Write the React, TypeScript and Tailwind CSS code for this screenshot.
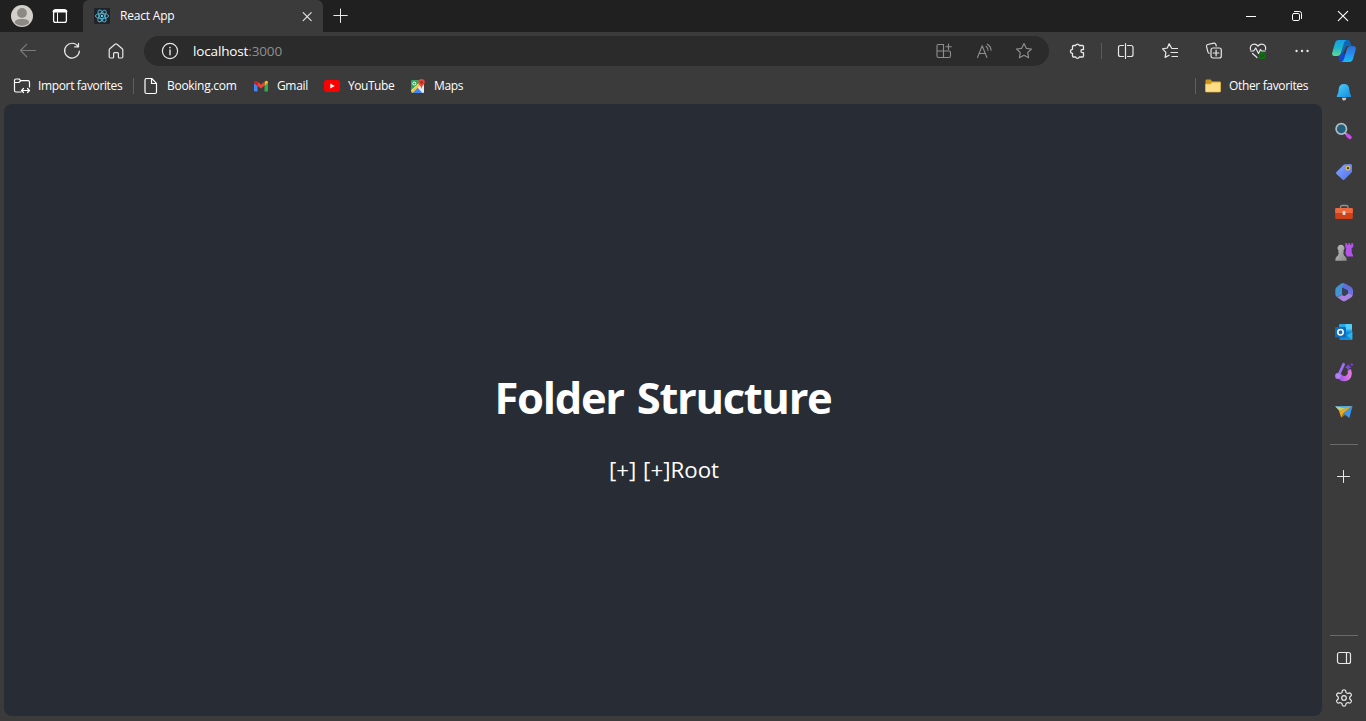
import React, { ReactNode } from 'react';

type P = { children: ReactNode; size?: number; className?: string; w?: number };
const Icon = ({ children, size = 20, w = 1.1, className = '' }: P) => (
  <svg width={size} height={size} viewBox={`0 0 ${size} ${size}`} fill="none" stroke="currentColor" strokeWidth={w} strokeLinecap="round" strokeLinejoin="round" className={`shrink-0 ${className}`}>{children}</svg>
);
const Cell = ({ children, className }: { children: ReactNode; className: string }) => (
  <div className={`flex shrink-0 items-center justify-center ${className}`}>{children}</div>
);

const STAR = 'M10 2.6l2.3 4.7 5.1.7-3.7 3.6.9 5.1L10 14.3l-4.6 2.4.9-5.1L2.6 8l5.1-.7z';

function Gear() {
  const pts: string[] = [];
  for (let i = 0; i <= 72; i++) {
    const a = (i / 72) * Math.PI * 2;
    const r = 6.9 + 1.2 * Math.tanh(2.2 * Math.cos(6 * a));
    pts.push(`${(10 + r * Math.sin(a)).toFixed(2)} ${(10 - r * Math.cos(a)).toFixed(2)}`);
  }
  return <Icon w={1.2}><path d={`M${pts.join('L')}z`} /><circle cx="10" cy="10" r="2.3" /></Icon>;
}

function TabBar() {
  return (
    <header className="flex h-8 shrink-0 bg-[#202020]">
      <div className="flex w-[83px] items-center pl-[11px]">
        <svg width="22" height="22" viewBox="0 0 22 22"><circle cx="11" cy="11" r="11" fill="#d3d0cc" /><circle cx="11" cy="8" r="4.9" fill="#8c8883" /><path d="M3.8 18c0-3 2.300-4 7.200-4s7.200 1 7.200 4A10.500 10.500 0 0 1 11 21a10.500 10.500 0 0 1-7.200-3z" fill="#8c8883" /></svg>
        <Icon className="ml-[17px] text-white" w={1.3}><rect x="3.6" y="3.6" width="12.8" height="12.8" rx="2" /><path d="M4 5.2h12" strokeWidth="2.6" /><path d="M7.500 7v9" strokeWidth="1" /></Icon>
      </div>
      <div className="flex w-60 items-center rounded-t-md bg-[#3b3b3b] pl-[11px]">
        <svg width="16" height="16" viewBox="0 0 16 16" fill="none" stroke="#52b6d1" strokeWidth=".9"><rect width="16" height="16" rx="1" fill="#20232a" stroke="none" /><ellipse cx="8" cy="8" rx="6.6" ry="2.6" /><ellipse cx="8" cy="8" rx="6.6" ry="2.6" transform="rotate(60 8 8)" /><ellipse cx="8" cy="8" rx="6.6" ry="2.6" transform="rotate(120 8 8)" /><circle cx="8" cy="8" r="1.2" fill="#61dafb" stroke="none" /></svg>
        <span className="ml-[10px] flex-1 text-xs tracking-[-0.2px] text-white">React App</span>
        <Icon className="mr-[6px]"><path d="M6.200 6.700l8 8M14.200 6.700l-8 8" /></Icon>
      </div>
      <Icon className="ml-2 mt-[6px]"><path d="M9.500 3v13.500M2.800 9.500h13.500" strokeWidth="1" /></Icon>
      <div className="ml-auto flex text-white">
        <Cell className="w-[46px]"><Icon w={1}><path d="M5 10.500h10" strokeLinecap="butt" /></Icon></Cell>
        <Cell className="w-[46px]"><Icon w={1}><rect x="5.500" y="7.500" width="7" height="7" rx="1.300" /><path d="M7.500 5.500h5q2 0 2 2v5" /></Icon></Cell>
        <Cell className="w-[46px]"><Icon><path d="M5.300 5.300l9.400 9.400M14.700 5.300l-9.400 9.400" /></Icon></Cell>
      </div>
    </header>
  );
}

function Toolbar() {
  return (
    <div className="flex h-[38px] items-center pl-[6px]">
      <Cell className="w-11 text-[#7c7c7c]"><Icon><path d="M17.500 9.500h-15M8.800 3.200L2.500 9.500l6.300 6.300" /></Icon></Cell>
      <Cell className="w-11"><Icon w={1.2}><path d="M16.200 5.600A7.400 7.400 0 1 0 17.400 10M16.500 2.300v3.600h-3.800" /></Icon></Cell>
      <Cell className="w-11"><Icon w={1.2}><path d="M3.200 9q0-.8.600-1.300l5.200-4.500q1-.8 2 0l5.200 4.500q.6.500.6 1.300v6.800q0 1.200-1.200 1.200h-2.200q-1 0-1-1v-3.400q0-1-1-1h-2.800q-1 0-1 1V16q0 1-1 1H4.400q-1.200 0-1.200-1.200z" /></Icon></Cell>
      <div className="ml-[6px] flex h-[30px] w-[905px] shrink-0 items-center rounded-full bg-[#2b2b2b] pl-4 pr-[5px]">
        <Icon w={1.2}><circle cx="10" cy="10" r="7.600" /><path d="M10 9v4.800" strokeWidth="1.400" /><path d="M10 6.500v.1" strokeWidth="1.700" /></Icon>
        <span className="ml-[13px] flex-1 text-[13.5px] tracking-[-0.14px] text-white">localhost<span className="text-[#8f8f8f]">:3000</span></span>
        <div className="flex text-[#8e8e8e]">
          <Cell className="w-10"><Icon><path d="M9.500 3.500h-5q-1.500 0-1.500 1.500v10q0 1.500 1.500 1.500h10.500q1.500 0 1.500-1.500v-3.500q0-1.500-1.500-1.500H3M9.500 3.500v13M14.500 3v5.500M11.800 5.700h5.500" /></Icon></Cell>
          <Cell className="w-10"><Icon><path d="M3.500 16.500l4.700-11.800 4.700 11.800M5.100 12.500h6.200M12 5.300q2 1.400 2 4M13.300 3.200q3.700 2.300 3.700 6" /></Icon></Cell>
          <Cell className="w-10"><Icon w={1.2}><path d={STAR} /></Icon></Cell>
        </div>
      </div>
      <Cell className="ml-[6px] w-11"><Icon w={1.3}><path d="M6.500 4.500h2.200a1.900 1.900 0 0 1 3.600 0H15.500q1 0 1 1v3h-1a1.600 1.600 0 0 0 0 3.200h1v3.300q0 1-1 1h-3.200a1.900 1.900 0 0 1-3.600 0H6.500q-1 0-1-1v-2.700a2 2 0 0 1 0-4V5.500q0-1 1-1z" /></Icon></Cell>
      <div className="mx-[2px] h-4 w-px shrink-0 bg-[#5b5b5b]" />
      <Cell className="w-11"><Icon w={1.2}><path d="M7.500 4.500H4.500q-2 0-2 2v7q0 2 2 2h3M11.500 4.500h3.500q2 0 2 2v7q0 2-2 2h-3.500M9.500 2.500v15" /></Icon></Cell>
      <Cell className="w-11"><Icon w={1.2}><path d="M11.500 7L9.200 2.700 7.300 7l-4.700.8 3.300 3.600-.8 5 4-2.200M12 7.500h5.500M11 11.500h6.500M12 15.500h5.500" /></Icon></Cell>
      <Cell className="w-11"><Icon w={1.2}><path d="M5.200 12.300q-1-.3-1.300-1.400L2.500 5.400q-.3-1.500 1.200-1.900l6.200-1.300q1.400-.2 1.900 1.100l.5 1.700" /><rect x="7" y="7" width="10.300" height="10" rx="2" /><path d="M12.100 9.200v5.600M9.300 12h5.600" /></Icon></Cell>
      <Cell className="w-11"><Icon w={1.2}><path d="M2.500 8.500C1.500 4 6.500 1 10 5c3.500-4 8.500-1 7.500 3.500M2.500 10h3.200l2-3 2.800 5.500 2-4 1.200 1.500h3.500M4.500 12.500l4.500 4" /><circle cx="14.300" cy="14.700" r="3.600" fill="#0d7010" stroke="none" /><path d="M12.800 14.800l1.100 1 2-2" stroke="#2c2c2c" strokeWidth=".8" /></Icon></Cell>
      <Cell className="w-11"><Icon><path d="M4.500 10h.1M10 10h.1M15.500 10h.1" strokeWidth="2.300" /></Icon></Cell>
    </div>
  );
}

function Bookmarks() {
  return (
    <div className="flex h-[34px] items-center pb-[2px] pl-3 text-xs tracking-[-0.35px] text-white">
      <div className="flex w-[121px] items-center whitespace-nowrap">
        <Icon w={1.2}><path d="M9 16H4q-1.500 0-1.500-1.500v-10Q2.500 3 4 3h3l1.700 1.700H16q1.500 0 1.500 1.500V11M2.800 6.500h4l2-1.700M9.500 14.500h8M11.500 12.500l-2 2 2 2M15.500 12.500l2 2-2 2" /></Icon>
        <span className="ml-[6px]">Import favorites</span>
      </div>
      <div className="h-4 w-px bg-[#5f5f5f]" />
      <div className="ml-[7px] flex w-[110px] items-center">
        <Icon w={1.2}><path d="M5.500 2.500h5.200l4.800 4.800v8.700q0 1.500-1.500 1.500H5.500Q4 17.500 4 16V4q0-1.500 1.500-1.500zM10.500 2.800v4.700h4.800" /></Icon>
        <span className="ml-[6px] tracking-[-0.28px]">Booking.com</span>
      </div>
      <div className="flex w-[71px] items-center">
        <svg className="ml-[2px]" width="16" height="16" viewBox="0 0 16 16"><path d="M1 4.500l3.500 2.600V13.500H2.200Q1 13.500 1 12.300z" fill="#4285f4" /><path d="M15 4.500l-3.500 2.600v6.400h2.300q1.200 0 1.200-1.200z" fill="#34a853" /><path d="M11.500 4l1-.9q1.200-.7 2.100.2.400.4.400 1.500l-3.500 3z" fill="#fbbc04" /><path d="M4.500 3.800L8 6.500l3.500-2.700v4L8 10.500 4.500 7.800z" fill="#ea4335" /><path d="M1 4.800Q1 2.800 2.700 2.800q.6 0 1.800 1v4L1 5.500z" fill="#c5221f" /></svg>
        <span className="ml-[8px]">Gmail</span>
      </div>
      <div className="flex w-[87px] items-center">
        <svg className="ml-[2px]" width="16" height="16" viewBox="0 0 16 16"><rect y="2" width="16" height="12" rx="3" fill="#f00" /><path d="M6.300 5.400v5.200L10.700 8z" fill="#fff" /></svg>
        <span className="ml-[8px] tracking-[-0.45px]">YouTube</span>
      </div>
      <div className="flex items-center">
        <svg className="ml-px" width="16" height="16" viewBox="0 0 16 16"><rect x="1" y="2" width="13" height="13" rx="1" fill="#35a35b" /><path d="M1 12.500L11 3l3 3v8q0 1-1 1H3z" fill="#e8eaed" /><path d="M2.500 15l5-5.500 5 5.500z" fill="#4285f4" /><path d="M2 14L12.500 3.500" stroke="#fbc02d" strokeWidth="1.800" /><path d="M11.500 1a3.300 3.300 0 0 1 3.300 3.300c0 2.300-2.800 3-3.300 6.700-.5-3.700-3.300-4.400-3.300-6.700A3.300 3.300 0 0 1 11.500 1z" fill="#ea4335" /><circle cx="11.500" cy="4.400" r="1.200" fill="#8c2b20" /><circle cx="4.300" cy="5.500" r="1.500" fill="none" stroke="#fff" /></svg>
        <span className="ml-[8px]">Maps</span>
      </div>
      <div className="ml-auto h-4 w-px bg-[#5f5f5f]" />
      <div className="ml-[9px] flex w-[117px] items-center whitespace-nowrap">
        <svg width="16" height="16" viewBox="0 0 16 16"><path d="M.5 2.500q0-1 1-1h4.200l1.600 2h7.200q1 0 1 1v9.500h-15z" fill="#c9961b" /><path d="M.5 6h5l1.800-1.800h8.200V13q0 1-1 1h-13q-1 0-1-1z" fill="#ffdf85" stroke="#e2b13c" strokeWidth=".7" /></svg>
        <span className="ml-[8px]">Other favorites</span>
      </div>
    </div>
  );
}

function Copilot() {
  return (
    <svg width="24" height="24" viewBox="0 0 24 24">
      <defs>
        <linearGradient id="ca" x1="0" y1="0" x2="0" y2="1"><stop offset="0" stopColor="#12a0e8" /><stop offset=".5" stopColor="#1fb5c9" /><stop offset="1" stopColor="#5fdc94" /></linearGradient>
        <linearGradient id="cb" x1="0" y1="0" x2="0" y2="1"><stop offset="0" stopColor="#2470d8" /><stop offset=".5" stopColor="#2b8cee" /><stop offset="1" stopColor="#0fc0f2" /></linearGradient>
      </defs>
      <path d="M11 1h5q1.500 0 2 1.500L19.500 7h-5L9 18z" fill="#1065b8" />
      <path d="M8.500 23h4q2 0 3-2l1-4-6-3-4 3 .5 4q.5 2 1.500 2z" fill="#1546c8" />
      <path d="M6.500 1h8q-2 .8-2.600 3.200L9 14q-.8 3-4 3H3Q-.5 17 .3 13.500L3 4q1-3 3.500-3z" fill="url(#ca)" />
      <path d="M17.500 23h-8q2-.8 2.600-3.200L15 10q.8-3 4-3h2q3.500 0 2.700 3.500L21 20q-1 3-3.500 3z" fill="url(#cb)" />
    </svg>
  );
}

const apps: ReactNode[] = [
  <><linearGradient id="be" x1="0" y1="0" x2="1" y2="1"><stop stopColor="#4bd0fb" /><stop offset="1" stopColor="#168ae0" /></linearGradient><path d="M10 2q5 0 5.300 5.500.1 4 1.900 6.500.3 1-.6 1H3.400q-.9 0-.6-1 1.800-2.500 1.900-6.500Q5 2 10 2z" fill="url(#be)" /><path d="M8 15.700h4.500Q12 18.500 10 18.500t-2-2.800z" fill="#c8c8c8" /></>,
  <><path d="M10.800 10.800l2.500 2.300" stroke="#9aa" strokeWidth="2" /><path d="M13.600 13.400l2.400 2" stroke="#c94bee" strokeWidth="3.600" strokeLinecap="round" /><circle cx="7.300" cy="6.900" r="5.200" fill="#22607c" stroke="#aebcc3" strokeWidth="1.700" /></>,
  <><linearGradient id="ta" x1="0" y1="0" x2="1" y2="1"><stop stopColor="#82a9ff" /><stop offset="1" stopColor="#5570ee" /></linearGradient><path d="M10 2.500L16.500 2q1.500 0 1.500 1.500V10l-7.500 7.500q-1 1-2 0L2.500 12q-1-1 0-2z" fill="url(#ta)" /><circle cx="14" cy="6.200" r="1.800" fill="#334" stroke="#f0bd25" strokeWidth="1.300" /></>,
  <><path d="M6.500 6.500V5q0-1.500 1.500-1.500h4.500Q14 3.500 14 5v1.500" fill="none" stroke="#8c9296" strokeWidth="1.300" /><rect x="1.200" y="6" width="17.600" height="11" rx="1.200" fill="#cf4219" /><path d="M1.200 11V7.200q0-1.200 1.200-1.200h15.200q1.200 0 1.200 1.200V11z" fill="#ed683d" /><rect x="8.500" y="9" width="3" height="4" rx="1" fill="#dadada" /></>,
  <><linearGradient id="pw" x1="0" y1="0" x2="1" y2="1"><stop stopColor="#bdbdbd" /><stop offset="1" stopColor="#8b8b8b" /></linearGradient><path d="M11.300 1.200h1.900v1.800h1V1.200h2.100v1.800h1V1.200h1.900V5l-1.700 1.300.4 5.200q1.200 1 1.200 3h-6l-1.600-3 .7-5.200L11.300 5z" fill="#b553ec" /><path d="M7 2.700a3.500 3.500 0 0 1 2.300 6.100l.8 1.400H9.200q0 3 2 4.300 1.500 1 1.500 4.300H1.300q0-3.300 1.500-4.300 2-1.300 2-4.300h-.9l.8-1.400A3.500 3.500 0 0 1 7 2.700z" fill="url(#pw)" /></>,
  <><path d="M6.300 2.200Q9 .4 11.500 1.700l5.700 3.400Q18.700 6 18.700 8v3.500q-2.700 1.300-4.700-.5V8.500L8 5.500z" fill="#626dd8" /><path d="M6.300 2.200Q8.500.8 10.500 1.500 8 3 8 6v7l-5.100 1.900Q1.300 14 1.300 12V8q0-2 1.700-3.200z" fill="#4394d2" /><path d="M2.900 14.900q3.100-.2 5.100-1.900l2.500 1 3.500-2.500 4.700-3.500v4.800q0 1.600-1.600 2.700l-5.300 3.200q-1.800 1-3.600 0z" fill="#aa82df" /><path d="M14 8v3.500l4.700 1.500V8z" fill="#6a72df" /><path d="M8 6.200l6 2.600v2.700L10.500 14 8 12.700z" fill="#37425a" /></>,
  <><rect x="5" y="2" width="13" height="9" rx="1" fill="#28a8ea" /><path d="M11.500 2H17q1 0 1 1v4.500h-6.500z" fill="#50d0ff" /><path d="M5.500 9.500h12.800V17q0 1-1 1H6.500q-1 0-1-1z" fill="#1687d4" /><path d="M18.300 9.500L13 13.500l5 4.300q.3-.3.300-1z" fill="#28b5e8" /><rect x="1" y="5" width="11" height="10.500" rx="1" fill="#0f6cbd" /><circle cx="6.500" cy="10.200" r="2.700" fill="none" stroke="#fff" strokeWidth="1.500" /></>,
  <><linearGradient id="dr" x1="0" y1="0" x2="1" y2="0"><stop stopColor="#8c52ea" /><stop offset="1" stopColor="#ef7be0" /></linearGradient><path d="M3.500 15q2.200 4.600 7.300 4.200 6.700-.9 7-7.700 0-2.500-1.200-4.500l-3 1.800q.9 4-2 5T7.500 12z" fill="url(#dr)" /><path d="M9.600 2.300L4.700 13" stroke="#9f6df6" strokeWidth="2.800" strokeLinecap="round" /><circle cx="4" cy="14" r="2.900" fill="#b27df7" /><path d="M14.200 2l1.200 2.200 2.200.8-2.200 1.200-1.200 2.300-1.300-2.300-2.100-1.200 2.200-.8zM17.900.6l.5 1.400 1.400.4-1.300.6-.5 1.400-.7-1.400-1.300-.5 1.300-.5z" fill="#8046e0" /></>,
  <><path d="M1.200 4.300L18.500 4 6.500 9.500z" fill="#4fb6f0" /><path d="M1.200 4.300L11 6.500 5.500 9z" fill="#c9d06a" /><path d="M5 8.800L18.500 4 9.300 11.500 7.200 15.700z" fill="#eaa81f" /><path d="M9.300 11.500L7.200 15.700l4-2.700z" fill="#b07811" /><path d="M18.500 4L15.400 16 9.300 11.500z" fill="#3a96ea" /></>,
];

function Sidebar() {
  return (
    <aside className="flex w-11 shrink-0 flex-col items-center pb-[3px]">
      <Cell className="mb-[2px] h-[38px] w-11"><Copilot /></Cell>
      {apps.map((a, i) => <Cell key={i} className="h-10 w-11"><svg width="20" height="20" viewBox="0 0 20 20">{a}</svg></Cell>)}
      <div className="mt-3 h-px w-7 bg-[#6a6a6a]" />
      <Cell className="mt-3 h-10 w-11"><Icon w={1}><path d="M9.500 3.500v12M3.500 9.500h12" /></Icon></Cell>
      <div className="mt-auto h-px w-7 bg-[#6a6a6a]" />
      <Cell className="mt-[2px] h-10 w-11"><Icon w={1.2}><rect x="3.500" y="4.500" width="13" height="11" rx="2" /><path d="M12.500 4.500v11" /></Icon></Cell>
      <Cell className="h-10 w-11"><Gear /></Cell>
    </aside>
  );
}

export default function App() {
  return (
    <div className="flex h-[721px] w-[1366px] flex-col overflow-hidden bg-[#3b3b3b] font-['Open_Sans','Noto_Sans',sans-serif] text-[#e8e8e8]">
      <TabBar />
      <div className="flex min-h-0 flex-1">
        <div className="flex w-[1322px] shrink-0 flex-col">
          <Toolbar />
          <Bookmarks />
          <main className="mb-[5px] ml-1 flex flex-1 flex-col items-center justify-center rounded-lg bg-[#282c34] pt-[33px] text-white">
            <h1 className="text-[43.5px] font-bold leading-[60px] tracking-[-1.3px] [word-spacing:3px]">Folder Structure</h1>
            <div className="mt-[27px] pl-[2px] text-[22.3px] leading-[30px] [word-spacing:1px]">[+] [+]Root</div>
          </main>
        </div>
        <Sidebar />
      </div>
    </div>
  );
}
